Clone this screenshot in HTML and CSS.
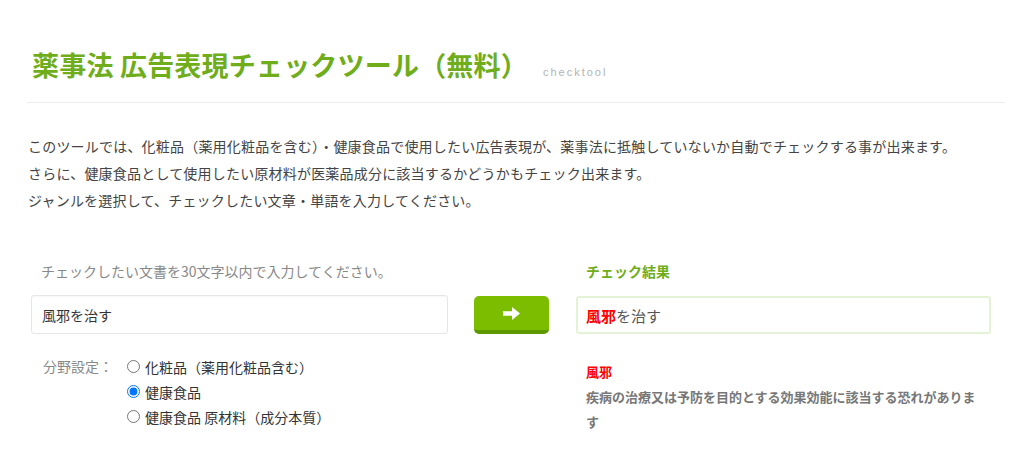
FILE: index.html
```html
<!DOCTYPE html>
<html lang="ja">
<head>
<meta charset="utf-8">
<title>薬事法 広告表現チェックツール（無料）</title>
<link rel="stylesheet" href="styles.css">
</head>
<body>
<div class="page">
  <header class="head">
    <h1 class="title">薬事法 広告表現チェックツール（無料）</h1>
    <span class="sub">checktool</span>
  </header>
  <div class="desc">
    <p>このツールでは、化粧品（薬用化粧品を含む）・健康食品で使用したい広告表現が、薬事法に抵触していないか自動でチェックする事が出来ます。</p>
    <p>さらに、健康食品として使用したい原材料が医薬品成分に該当するかどうかもチェック出来ます。</p>
    <p>ジャンルを選択して、チェックしたい文章・単語を入力してください。</p>
  </div>
  <div class="tool">
    <div class="col-left">
      <div class="label">チェックしたい文書を30文字以内で入力してください。</div>
      <div class="input">風邪を治す</div>
      <div class="genre">
        <div class="genre-label">分野設定：</div>
        <div class="options">
          <label class="opt"><input type="radio" name="g"><span>化粧品（薬用化粧品含む）</span></label>
          <label class="opt"><input type="radio" name="g" checked><span>健康食品</span></label>
          <label class="opt"><input type="radio" name="g"><span>健康食品 原材料（成分本質）</span></label>
        </div>
      </div>
    </div>
    <div class="col-mid">
      <button class="go" type="button" aria-label="チェック">
        <svg width="17" height="13" viewBox="0 0 17 13"><path d="M0 4.3h9V0l8 6.5-8 6.5V8.7H0z" fill="#fff"/></svg>
      </button>
    </div>
    <div class="col-right">
      <div class="res-label">チェック結果</div>
      <div class="result"><span class="hit">風邪</span>を治す</div>
      <div class="explain">
        <div class="hit-word">風邪</div>
        <div class="reason">疾病の治療又は予防を目的とする効果効能に該当する恐れがあります</div>
      </div>
    </div>
  </div>
</div>
</body>
</html>
```
FILE: styles.css
```css
* { box-sizing: border-box; }
html, body { margin: 0; padding: 0; background: #fff; }
body {
  font-family: "Noto Sans CJK JP", "Noto Sans", sans-serif;
  color: #444;
}
.page {
  width: 1024px;
  height: 452px;
  overflow: hidden;
  padding: 0 19px 0 27px;
}
.head {
  display: flex;
  align-items: baseline;
  border-bottom: 1px solid #eeeeee;
  padding: 46px 0 18px 5px;
}
.title {
  margin: 0;
  font-size: 27px;
  line-height: 38px;
  font-weight: 700;
  letter-spacing: 0.2px;
  color: #70ad1b;
}
.sub {
  margin-left: 15px;
  font-family: "Liberation Sans", Arial, sans-serif;
  font-size: 11px;
  letter-spacing: 2px;
  color: #b3b3b3;
}
.desc {
  margin-top: 30px;
  padding-left: 1px;
}
.desc p {
  margin: 0;
  font-size: 14px;
  line-height: 27px;
  letter-spacing: 0.2px;
  color: #444;
}
.tool {
  display: grid;
  grid-template-columns: 417px 76px 415px;
  column-gap: 26px;
  margin-top: 47px;
  padding-left: 4px;
}
.label {
  padding-left: 10px;
  font-size: 14px;
  line-height: 20px;
  color: #888;
}
.input {
  margin-top: 14px;
  height: 39px;
  border: 1px solid #e6e6e6;
  border-radius: 3px;
  padding: 0 10px;
  display: flex;
  align-items: center;
  font-size: 14px;
  color: #333;
  box-shadow: inset 0 1px 1px rgba(0,0,0,0.03);
}
.genre {
  display: flex;
  margin-top: 20px;
  padding-left: 12px;
}
.genre-label {
  width: 84px;
  font-size: 14px;
  line-height: 25px;
  color: #888;
}
.options { display: flex; flex-direction: column; }
.opt {
  display: flex;
  align-items: center;
  height: 25px;
  font-size: 14px;
  color: #333;
}
.opt input {
  margin: 0 5px 0 0;
  width: 13px;
  height: 13px;
}
.col-mid { padding-top: 35px; }
.go {
  display: flex;
  align-items: center;
  justify-content: center;
  width: 75px;
  height: 38px;
  padding: 0;
  border: 0;
  border-bottom: 4px solid #5e9800;
  border-radius: 5px;
  background: #7cbd00;
}
.res-label {
  padding-left: 10px;
  font-size: 14px;
  line-height: 20px;
  font-weight: 700;
  color: #70ad1b;
}
.result {
  margin-top: 15px;
  height: 38px;
  border: 2px solid #e4f2d5;
  border-radius: 3px;
  padding: 0 8px;
  display: flex;
  align-items: center;
  font-size: 15px;
  color: #555;
}
.hit { color: #ff0000; font-weight: 700; }
.explain {
  margin-top: 25px;
  padding: 0 10px;
  font-size: 13px;
  line-height: 25px;
  font-weight: 700;
}
.hit-word { color: #ff0000; }
.reason { color: #777; }
```
